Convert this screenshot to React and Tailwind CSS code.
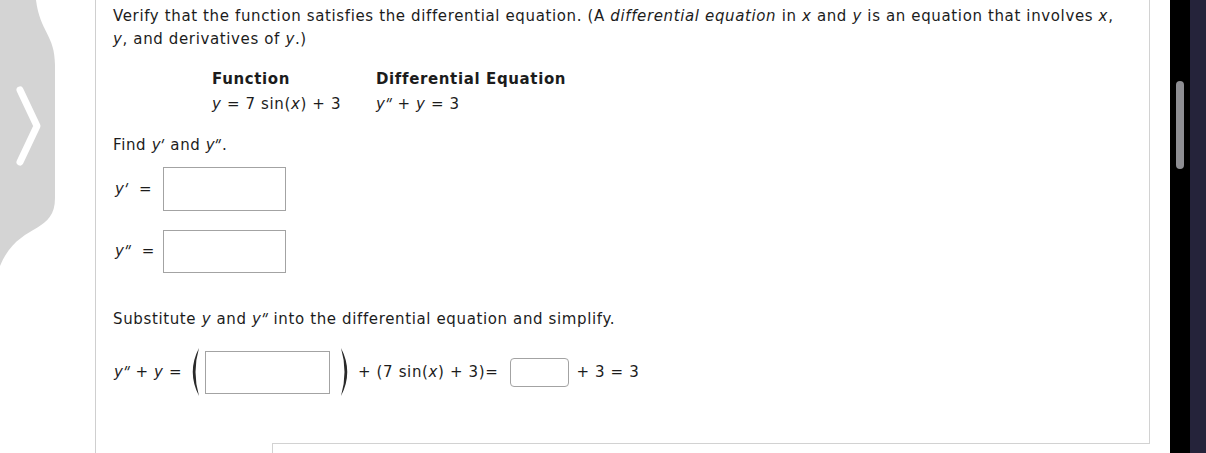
import React from 'react'

const Box = ({ className }) => (
  <div className={'border border-[#a3a3a3] bg-white ' + className} />
)

const Paren = ({ flip }) => (
  <svg width="14" height="50" viewBox="0 0 14 50" className={flip ? 'scale-x-[-1]' : ''}>
    <path d="M12 1 Q-0.5 25 12 49 Q5 25 12 1 Z" fill="#2a2a2a" />
  </svg>
)

// italic y with a slanted prime mark
const Y = ({ p }) => (
  <i>
    y<span className="-ml-[2px] mr-[1px] inline-block -skew-x-[22deg] not-italic">{p}</span>
  </i>
)

export default function App() {
  return (
    <div className="flex h-[453px] w-[1206px] overflow-hidden bg-white font-['DejaVu_Sans',Verdana,sans-serif] text-[15px] leading-[23px] tracking-[0.63px] text-[#1c1c1c]">
      {/* left nav arrow */}
      <div className="w-[95px] shrink-0">
        <svg width="60" height="270" viewBox="0 0 60 270">
          <path d="M0 0 H36 C40 32 55 35 55 65 V198 C55 235 18 222 0 266 Z" fill="#d4d4d4" />
          <path d="M20 90 L37 126 L20 162" fill="none" stroke="#fff" strokeWidth="7" strokeLinecap="round" strokeLinejoin="round" />
        </svg>
      </div>

      {/* question card */}
      <div className="flex w-[1055px] shrink-0 flex-col border-l border-[#cfcfcf]">
        <div className="flex-1 border-r border-[#d2d2d2] pl-[17px] pr-[10px] pt-[5px]">
          <p className="whitespace-nowrap">
            Verify that the function satisfies the differential equation. (A <i>differential equation</i> in <i>x</i> and <i>y</i> is an equation that involves <i>x</i>,
            <br />
            <i>y</i>, and derivatives of <i>y</i>.)
          </p>

          <div className="ml-[99px] mt-[16px] grid grid-cols-[164px_auto] leading-[25px]">
            <div className="font-bold">Function</div>
            <div className="font-bold">Differential Equation</div>
            <div>
              <i>y</i> = 7 sin(<i>x</i>) + 3
            </div>
            <div>
              <Y p={'"'} /> + <i>y</i> = 3
            </div>
          </div>

          <p className="mt-[17px]">
            Find <Y p="'" /> and <Y p={'"'} />.
          </p>

          <div className="mt-[10px] flex items-center">
            <span className="w-[50px] pl-[2px]">
              <Y p="'" />&nbsp; =
            </span>
            <Box className="h-[44px] w-[123px]" />
          </div>

          <div className="mt-[19px] flex items-center">
            <span className="w-[50px] pl-[2px]">
              <Y p={'"'} />&nbsp; =
            </span>
            <Box className="h-[43px] w-[123px]" />
          </div>

          <p className="mt-[35px]">
            Substitute <i>y</i> and <Y p={'"'} /> into the differential equation and simplify.
          </p>

          <div className="mt-[16px] flex items-center">
            <span className="w-[74px] whitespace-nowrap pl-[1px]">
              <Y p={'"'} /> + <i>y</i> =
            </span>
            <Paren />
            <Box className="ml-[4px] h-[43px] w-[125px]" />
            <span className="ml-[9px]">
              <Paren flip />
            </span>
            <span className="ml-[5px] whitespace-nowrap">
              + (7 sin(<i>x</i>) + 3)=
            </span>
            <Box className="ml-[12px] h-[29px] w-[59px] rounded-[4px]" />
            <span className="ml-[7px] whitespace-nowrap">+ 3 = 3</span>
          </div>
        </div>
        <div className="flex h-[10px]">
          <div className="w-[176px]" />
          <div className="flex-1 border-l border-t border-[#d2d2d2]" />
        </div>
      </div>

      <div className="w-[20px] shrink-0" />

      {/* scrollbar */}
      <div className="relative w-[20px] shrink-0 bg-black">
        <div className="absolute left-[6px] top-[81px] h-[88px] w-[8px] rounded-full bg-[#8e8e93]" />
      </div>
      <div className="flex-1 bg-[#25233a]" />
    </div>
  )
}
